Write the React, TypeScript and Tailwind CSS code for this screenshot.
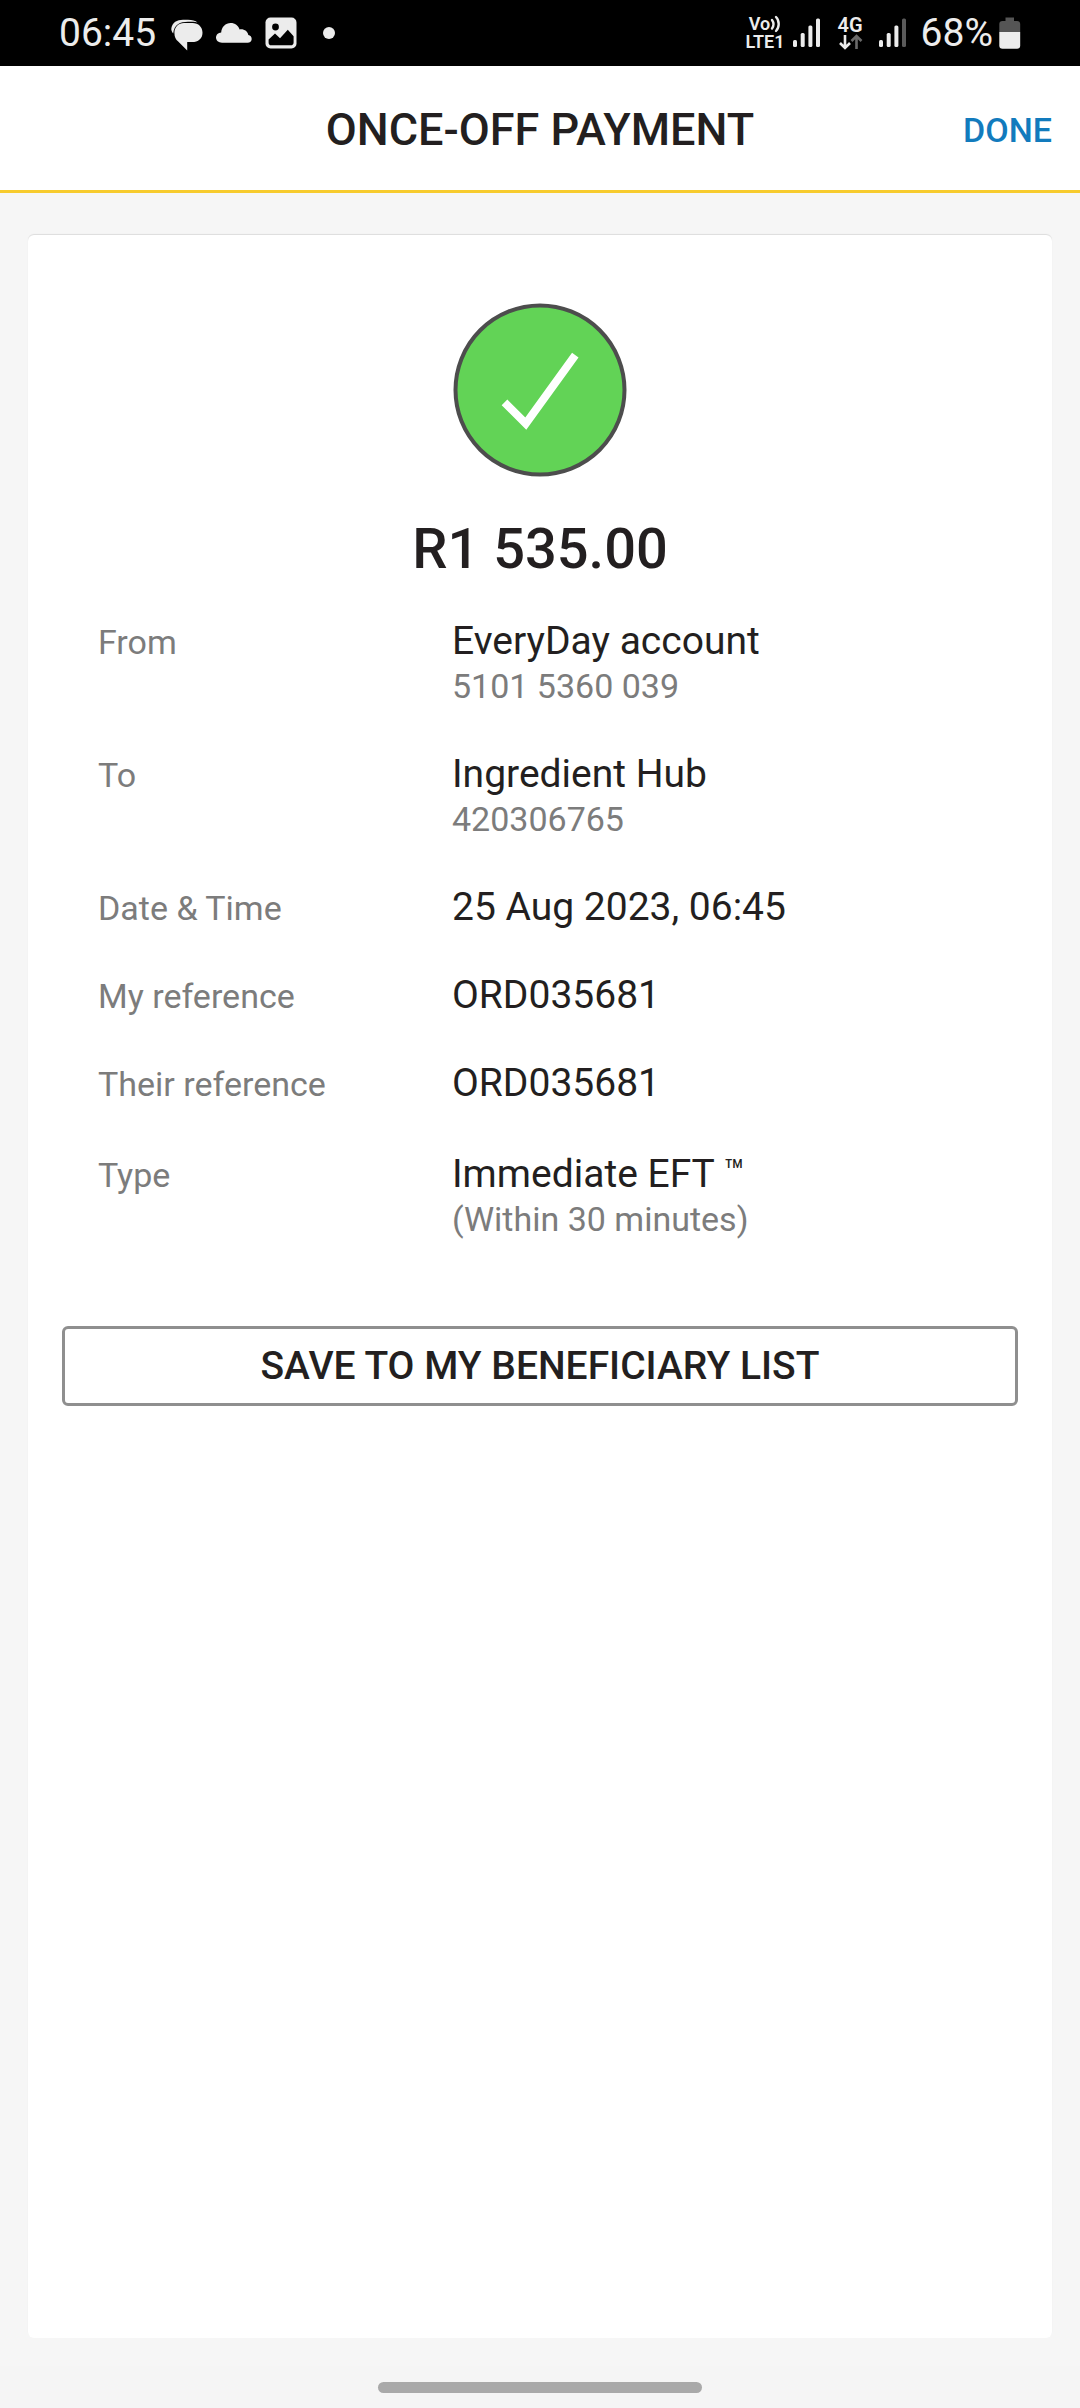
import type { ReactNode } from 'react';

interface DetailRow {
  label: string;
  value: ReactNode;
  note?: string;
}

const details: DetailRow[] = [
  { label: 'From', value: 'EveryDay account', note: '5101 5360 039' },
  { label: 'To', value: 'Ingredient Hub', note: '420306765' },
  { label: 'Date & Time', value: '25 Aug 2023, 06:45' },
  { label: 'My reference', value: 'ORD035681' },
  { label: 'Their reference', value: 'ORD035681' },
  {
    label: 'Type',
    value: <>Immediate EFT <span className="align-[4px] text-[34px]">™</span></>,
    note: '(Within 30 minutes)',
  },
];

function SignalIcon({ weak = false }: { weak?: boolean }) {
  return (
    <svg width="27" height="30" viewBox="0 0 27 30" fill="currentColor" aria-hidden="true">
      <rect x="0" y="22" width="4" height="7" rx="1.5" />
      <rect x="7.7" y="15" width="4" height="14" rx="1.5" />
      <rect x="15.4" y="7.5" width="4" height="21.5" rx="1.5" />
      <rect x="23" y="0.5" width="4" height="28.5" rx="1.5" fill={weak ? '#5a5a5a' : 'currentColor'} />
    </svg>
  );
}

function StatusBar() {
  return (
    <div className="flex h-[66px] items-center justify-between bg-black px-[59px] text-[#ececec]">
      <div className="flex items-center">
        <span className="text-[39px] leading-[46px]">06:45</span>
        <svg className="ml-[15px] mt-1" width="32" height="32" viewBox="0 0 32 32" fill="currentColor" aria-hidden="true">
          <path d="M2.2 14.5C0.8 12.8 0 11 0.4 9C1.3 3.6 6 0.7 12 0.7H17C21 0.7 24.5 1.8 26.5 3.4C24 2.9 21 2.8 17 2.8C9 2.8 3.2 5.5 2.2 14.5Z" />
          <path d="M13 4H21.5C27.5 4 31.5 8 31.5 13.7C31.5 19.5 27.3 23 21 23H16.2V31.5L7.2 22.5C4.8 20.8 3.4 18 3.4 14C3.4 8 7.5 4 13 4Z" />
        </svg>
        <svg className="ml-[13px]" width="36" height="20" viewBox="0 0 36 20" fill="currentColor" aria-hidden="true">
          <path d="M6 19.7C2.5 19.7 0 17.5 0 14.6C0 11.8 2.2 9.5 5.2 9.4C5.5 4 9.5 0 14.7 0C19 0 22.3 2.5 23.6 6.4C28 5.7 31.8 8.3 32.3 12C34.4 12.3 35.7 14 35.7 15.9C35.7 18.2 34 19.7 31.5 19.7Z" />
        </svg>
        <svg className="ml-[13px]" width="32" height="32" viewBox="0 0 32 32" aria-hidden="true">
          <rect x="0.5" y="0.5" width="31" height="31" rx="5" fill="currentColor" />
          <circle cx="10.5" cy="10" r="3.4" fill="#000" />
          <path d="M3.6 22.5L10 16.5L15 21.3L22.8 12.8L28.6 19.2V25.5C28.6 27.4 27.5 28.3 25.8 28.3H6.2C4.5 28.3 3.6 27.4 3.6 25.5Z" fill="#000" />
        </svg>
        <span className="ml-[26px] size-3 rounded-full bg-[#ececec]" />
      </div>

      <div className="flex items-center">
        <div className="flex flex-col items-center text-[18px] font-semibold leading-[18px]">
          <span className="flex items-center">
            Vo
            <svg width="11" height="18" viewBox="0 0 11 18" fill="none" stroke="currentColor" strokeWidth="2.4" strokeLinecap="round" aria-hidden="true">
              <path d="M2 5C3.8 7.5 3.8 11 2 13.5" />
              <path d="M6 2C9.6 5.5 9.6 12.5 6 16" />
            </svg>
          </span>
          <span>LTE1</span>
        </div>
        <span className="ml-2"><SignalIcon /></span>
        <div className="ml-[18px] flex flex-col items-center">
          <span className="text-[20px] font-semibold leading-[18px]">4G</span>
          <svg width="25" height="16" viewBox="0 0 25 16" fill="none" strokeWidth="2.6" aria-hidden="true">
            <path d="M7 1V14M2 9L7 14L12 9" stroke="currentColor" />
            <path d="M18.5 15V2M13.5 7L18.5 2L23.5 7" stroke="#6a6a6a" />
          </svg>
        </div>
        <span className="ml-4"><SignalIcon weak /></span>
        <span className="ml-[15px] text-[39px] leading-[46px]">68%</span>
        <svg className="ml-1.5" width="22" height="32" viewBox="0 0 22 32" aria-hidden="true">
          <path d="M6.5 0.5H15V4H18C20 4 21.2 5.2 21.2 7V15H0.3V7C0.3 5.2 1.5 4 3.5 4H6.5Z" fill="#555" />
          <path d="M0.3 15H21.2V28.5C21.2 30.6 20 31.7 18 31.7H3.5C1.5 31.7 0.3 30.6 0.3 28.5Z" fill="currentColor" />
        </svg>
      </div>
    </div>
  );
}

function SuccessIcon() {
  return (
    <svg className="mx-auto" width="174" height="174" viewBox="0 0 174 174" fill="none" aria-hidden="true">
      <circle cx="87" cy="87" r="84.5" fill="#62d356" stroke="#4d4d4d" strokeWidth="4" />
      <path d="M51.5 99.3L72.8 120.5L122.3 52.2" stroke="#fff" strokeWidth="8" />
    </svg>
  );
}

export default function App() {
  return (
    <div className="flex min-h-screen flex-col bg-[#f6f6f6] font-['Roboto',sans-serif] text-[#231f20]">
      <StatusBar />

      <header className="grid grid-cols-[1fr_auto_1fr] items-center border-b-3 border-[#f7cb2d] bg-white px-7 pb-[34px] pt-[38px]">
        <h1 className="col-start-2 text-[45px] font-medium leading-[52px]">ONCE-OFF PAYMENT</h1>
        <button type="button" className="cursor-pointer justify-self-end text-[34px] font-medium leading-[40px] text-[#127bbd]">
          DONE
        </button>
      </header>

      <main className="mx-7 mb-7 mt-[42px] flex-1 rounded-md bg-white px-[34px] pt-[68px] shadow-[0_-1px_1px_rgba(0,0,0,0.1)]">
        <SuccessIcon />
        <p className="mt-[39px] text-center text-[56px] font-medium leading-[66px]">R1 535.00</p>

        <dl className="mt-9 px-9">
          {details.map((row) => (
            <div key={row.label} className="flex items-baseline pb-[42px]">
              <dt className="w-[354px] shrink-0 text-[34px] leading-[40px] text-[#7c7c7c]">{row.label}</dt>
              <dd className="min-w-0 flex-1">
                <div className="text-[39px] leading-[46px]">{row.value}</div>
                {row.note && <div className="text-[34px] leading-[45px] text-[#7c7c7c]">{row.note}</div>}
              </dd>
            </div>
          ))}
        </dl>

        <button
          type="button"
          className="mt-[42px] w-full cursor-pointer rounded-md border-3 border-[#8f8f8f] py-[14px] text-[39px] font-medium leading-[46px]"
        >
          SAVE TO MY BENEFICIARY LIST
        </button>
      </main>

      <div className="flex h-[42px] items-center justify-center bg-[#f5f5f5]">
        <div className="h-[11px] w-[324px] rounded-full bg-[#a9a9a9]" />
      </div>
    </div>
  );
}
